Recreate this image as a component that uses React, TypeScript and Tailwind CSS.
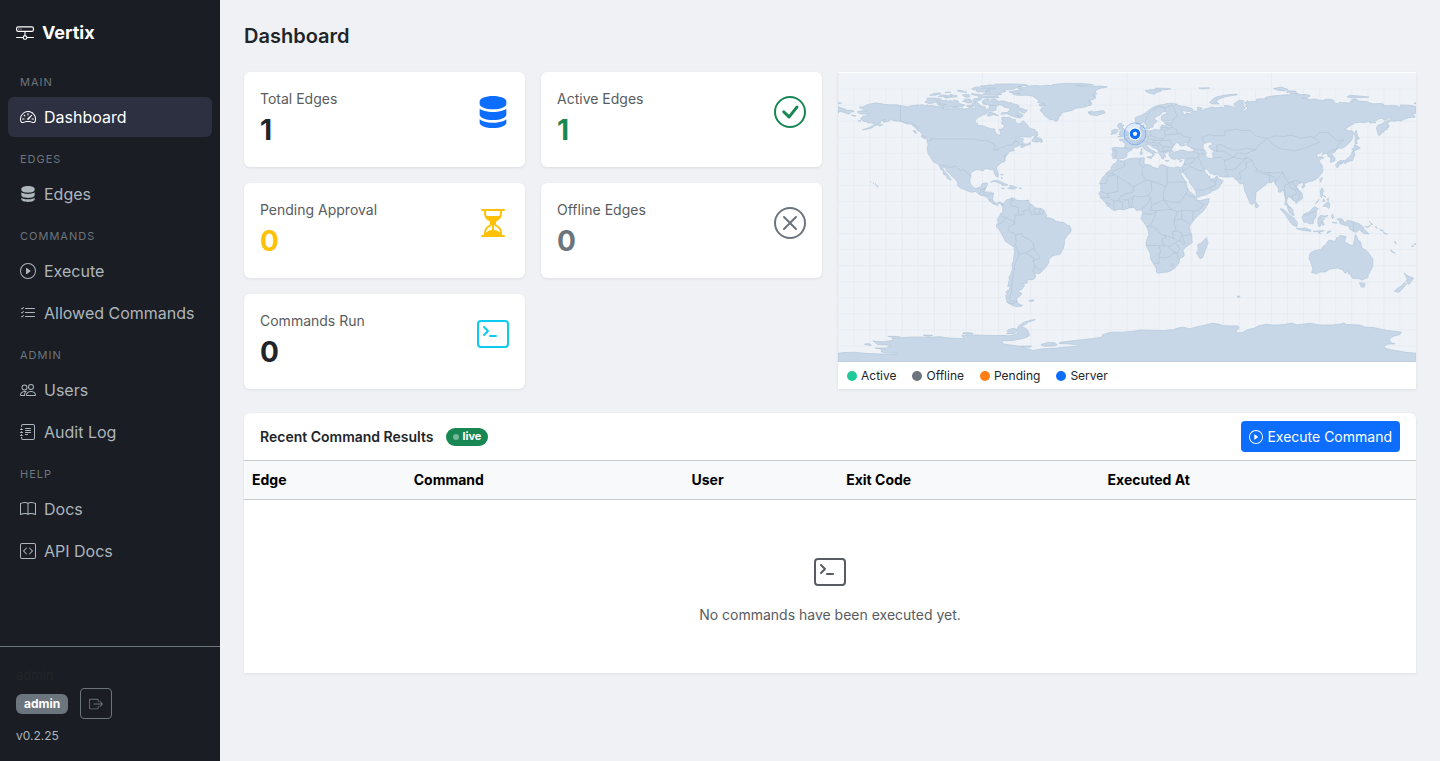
import React from 'react';
import {
  BsHddNetwork,
  BsSpeedometer2,
  BsServer,
  BsPlayCircle,
  BsListCheck,
  BsPeople,
  BsJournalText,
  BsBook,
  BsCodeSquare,
  BsBoxArrowRight,
  BsCheckCircle,
  BsHourglassSplit,
  BsXCircle,
  BsTerminal
} from 'react-icons/bs';

interface NavItem {
  label: string;
  icon: any;
  active?: boolean;
}

interface NavSection {
  title: string;
  items: NavItem[];
}

const navSections: NavSection[] = [
  { title: 'Main', items: [{ label: 'Dashboard', icon: BsSpeedometer2, active: true }] },
  { title: 'Edges', items: [{ label: 'Edges', icon: BsServer }] },
  {
    title: 'Commands',
    items: [
      { label: 'Execute', icon: BsPlayCircle },
      { label: 'Allowed Commands', icon: BsListCheck }
    ]
  },
  {
    title: 'Admin',
    items: [
      { label: 'Users', icon: BsPeople },
      { label: 'Audit Log', icon: BsJournalText }
    ]
  },
  {
    title: 'Help',
    items: [
      { label: 'Docs', icon: BsBook },
      { label: 'API Docs', icon: BsCodeSquare }
    ]
  }
];

const stats = [
  { label: 'Total Edges', value: 1, icon: BsServer, text: 'text-[#212529]', color: 'text-[#0d6efd]' },
  { label: 'Active Edges', value: 1, icon: BsCheckCircle, text: 'text-[#198754]', color: 'text-[#198754]' },
  { label: 'Pending Approval', value: 0, icon: BsHourglassSplit, text: 'text-[#ffc107]', color: 'text-[#ffc107]' },
  { label: 'Offline Edges', value: 0, icon: BsXCircle, text: 'text-[#6c757d]', color: 'text-[#6c757d]' },
  { label: 'Commands Run', value: 0, icon: BsTerminal, text: 'text-[#212529]', color: 'text-[#0dcaf0]' }
];

const legend = [
  { label: 'Active', color: 'bg-[#20c997]' },
  { label: 'Offline', color: 'bg-[#6c757d]' },
  { label: 'Pending', color: 'bg-[#fd7e14]' },
  { label: 'Server', color: 'bg-[#0d6efd]' }
];

const columns = [
  { label: 'Edge', width: 'w-[13.8%]' },
  { label: 'Command', width: 'w-[23.7%]' },
  { label: 'User', width: 'w-[13.2%]' },
  { label: 'Exit Code', width: 'w-[22.3%]' },
  { label: 'Executed At', width: 'w-[27%]' }
];

// Land outlines as "lon,lat" pairs
const land: string[] = [
  // North America
  '-141,69.7 -136.5,68.9 -134.4,69.6 -131.4,69.9 -129.8,70.2 -129.1,69.8 -127.4,70.4 -125.8,69.5 -124.4,70.2 -124.3,69.4 -121.5,69.8 -119.9,69.4 -117.6,69 -115.2,68.9 -113.9,68.4 -115.3,67.9 -113.5,67.7 -110.8,67.8 -109.9,68 -108.9,67.4 -107.8,67.9 -108.8,68.3 -108.2,68.7 -106.2,68.8 -105.3,68.6 -104.3,68 -103.2,68.1 -101.5,67.6 -99.9,67.8 -98.4,67.8 -98.6,68.4 -97.7,68.6 -96.1,68.2 -96.1,67.3 -95.5,68.1 -94.7,68.1 -94.2,69.1 -95.3,69.7 -96.5,70.1 -96.4,71.2 -95.2,71.9 -93.9,71.8 -92.9,71.3 -91.5,70.2 -92.4,69.7 -90.5,69.5 -90.5,68.5 -89.2,69.3 -88,68.6 -88.3,67.9 -87.4,67.2 -86.3,67.9 -85.6,68.8 -85.5,69.9 -84.1,69.8 -82.6,69.7 -81.3,69.2 -81.2,68.7 -82,68.1 -81.3,67.6 -81.4,67.1 -83.3,66.4 -84.7,66.3 -85.8,66.6 -86.1,66.1 -87,65.2 -87.3,64.8 -88.5,64.1 -89.9,64 -90.7,63.6 -90.8,63 -91.9,62.8 -93.2,62 -94.2,60.9 -94.6,60.1 -94.7,58.9 -93.2,58.8 -92.8,57.8 -92.3,57.1 -90.9,57.3 -89,56.9 -88,56.5 -87.3,56 -86.1,55.7 -85,55.3 -83.4,55.2 -82.3,55.1 -82.4,54.3 -82.1,53.3 -81.4,52.2 -79.9,51.2 -79.1,51.5 -78.6,52.6 -79.1,54.1 -79.8,54.7 -78.2,55.1 -77.1,55.8 -76.5,56.5 -76.6,57.2 -77.3,58.1 -78.5,58.8 -77.3,59.9 -77.8,60.8 -78.1,62.3 -77.4,62.6 -75.7,62.3 -73.8,62.4 -72.9,62.1 -71.7,61.5 -71.4,61.1 -69.6,61.1 -69.6,60.2 -69.3,59 -68.4,58.8 -67.6,58.2 -66.2,58.8 -65.2,59.9 -64.6,60.3 -63.8,59.4 -62.5,58.2 -61.4,57 -61.8,56.3 -60.5,55.8 -59.6,55.2 -58,54.9 -57.3,54.6 -56.9,53.8 -55.8,53.3 -55.7,52.1 -57.1,51.4 -58.8,51.1 -60,50.2 -61.7,50.1 -63.9,50.3 -66.4,50.2 -67.2,49.5 -68.5,49.1 -70,47.7 -71.1,46.8 -70.3,47 -68.7,48.3 -66.6,49.1 -65.1,49.2 -64.2,48.7 -65.1,48.1 -64.8,47 -64.5,46.2 -63.2,45.7 -61.5,45.9 -60.5,47 -60.4,46.3 -59.8,45.9 -61,45.3 -63.3,44.7 -65.4,43.5 -66.1,43.6 -66.2,44.5 -64.4,45.3 -66,45.3 -67.1,45.1 -68,44.3 -70.1,43.7 -70.7,43.1 -70.8,42.3 -70,41.8 -71.1,41.5 -72.9,41.2 -74,40.6 -74,39.7 -75.1,39 -75.5,39.5 -75,38.4 -76,37.2 -76.3,39.1 -76.3,38 -76,36.9 -75.7,35.6 -76.4,34.8 -77.4,34.5 -78.6,33.9 -79.2,33.2 -80.3,32.5 -81.3,31.4 -81.3,30 -80.5,28.5 -80.1,26.9 -80.4,25.2 -81.2,25.2 -81.7,25.9 -82.7,27.5 -82.9,29.1 -84.1,30.1 -85.1,29.6 -86.4,30.4 -89.2,30.3 -89.4,29.2 -90.2,29.1 -91.6,29.7 -93.8,29.7 -94.7,29.5 -96.6,28.3 -97.4,27.4 -97.1,25.9 -97.7,24.3 -97.8,22.4 -97.2,20.6 -95.9,18.8 -94.4,18.1 -92.8,18.5 -91.4,18.9 -90.8,19.3 -90.5,20.7 -89.6,21.3 -87.1,21.5 -86.8,20.8 -87.4,19.6 -87.8,18.3 -88.3,17.5 -88.9,15.9 -87.9,15.9 -86,15.9 -84.4,15.8 -83.1,15 -83.4,13.6 -83.6,11.6 -83.8,11.1 -82.5,9.5 -81.4,8.8 -79.6,9.6 -78.1,9.2 -77.4,8.7 -77.9,7.2 -78.4,8.4 -79.6,8.9 -80.4,8.3 -80.9,7.2 -81.7,8.1 -82.9,8.2 -83.7,8.7 -84.7,9.6 -84.9,10 -85.7,10 -85.9,10.9 -87.7,12.9 -89.3,13.5 -91.2,13.9 -92.2,14.5 -93.9,16 -94.7,16.2 -96.6,15.7 -98,16.1 -99.7,16.7 -101.7,17.7 -103.5,18.3 -104.9,19.3 -105.7,20.4 -105.3,21.4 -106,22.8 -108.4,25.2 -109.4,25.8 -109.3,26.4 -110.4,27.2 -112.2,29 -113.1,31.2 -114.8,31.5 -114.7,30.2 -112.8,28 -111.6,26.7 -111,25.7 -109.4,23.4 -110.2,23.3 -112.2,24.7 -112.3,26 -114.5,27.1 -114.2,28.6 -115.5,29.6 -116.7,31.6 -117.3,33 -118.4,33.7 -120.6,34.6 -121.7,36.2 -122.5,37.8 -123.9,39.8 -124.2,42 -124.5,42.8 -123.9,45.5 -124.6,48.2 -123.1,48 -122.6,47.1 -122.8,49 -125,50.4 -127.4,50.8 -128,52.3 -129.3,53.6 -130.5,54.3 -131.1,55.2 -132.3,56.4 -133.5,57.2 -134.1,58.1 -136.6,58.2 -137.8,58.5 -139.9,59.5 -142.6,60.1 -144,60 -146,60.5 -147.1,60.9 -148.2,60.7 -148,60 -149.7,59.7 -151.7,59.2 -151.4,60.7 -150.3,61 -151.9,60.7 -154,59.4 -153.3,58.9 -154.2,58.1 -156.3,57.4 -158.1,56.5 -158.4,56 -161.8,55 -164.8,54.6 -162.9,55.3 -160.6,56 -158.7,57 -157.7,57.6 -157,58.9 -158.2,58.6 -160.4,59.1 -161.4,58.7 -162,59.7 -163.8,59.8 -166.1,61.5 -165.3,62.1 -164.6,63.1 -163.1,63.1 -160.8,63.8 -161.5,64.4 -160.8,64.8 -162.8,64.3 -164.5,64.4 -166.4,64.7 -168.1,65.7 -166.7,66.1 -164.5,66.6 -161.7,66.1 -162.5,66.7 -163.7,67.1 -164.4,67.6 -166.8,68.4 -166.2,68.9 -164.4,68.9 -163.2,69.4 -161.9,70.3 -159,70.9 -156.6,71.4 -155.1,71.1 -152.3,70.8 -150.7,70.4 -147.6,70.2 -143.6,70.2',
  // South America
  '-77.4,8.7 -75.7,9.4 -75.5,10.6 -74.9,11.1 -73.4,11.3 -71.7,12.4 -71.3,12.1 -72,11.4 -71.3,10.9 -71.6,10 -71,10.2 -71.4,11.5 -70.2,12.2 -69.9,11.4 -68.2,10.6 -66.2,10.6 -64.3,10.4 -61.9,10.7 -62.7,10.4 -60.8,9.4 -60.7,8.6 -59.1,8 -57.1,6 -55.9,5.8 -53.6,5.6 -51.8,4.6 -51.3,4.1 -50.5,1.9 -49.9,1 -50.4,-.1 -48.6,-.2 -46.6,-.9 -44.9,-1.6 -44.6,-2.7 -43.4,-2.4 -41.5,-2.9 -39.9,-2.9 -38.5,-3.7 -37.2,-4.8 -35.6,-5.1 -35.2,-6.5 -34.7,-7.3 -35.1,-9 -37,-11 -37.7,-12.2 -39,-13.8 -38.9,-15.7 -39.3,-17.9 -39.8,-19.6 -40.8,-20.9 -41,-22 -42,-23 -44.6,-23.4 -46.5,-24.1 -48.5,-25.9 -48.9,-28.7 -50.7,-31 -52.7,-33.2 -53.8,-34.4 -54.9,-35 -56.2,-34.9 -57.8,-34.5 -58.4,-33.9 -58.5,-34.4 -57.2,-35.3 -57.4,-36 -56.7,-36.4 -57.7,-38.2 -59.2,-38.7 -62.3,-38.8 -62.1,-40.7 -63.8,-41.2 -65.1,-41.1 -65,-42.1 -63.8,-42.1 -65.3,-44.5 -67.3,-45.6 -67.6,-46.3 -65.6,-47.2 -66,-48.1 -67.8,-49.9 -69.1,-50.7 -68.2,-52.3 -69.5,-52.3 -71,-53.8 -72.6,-53.5 -74.7,-52.8 -75.6,-48.7 -74.1,-46.9 -75.6,-46.6 -73.2,-44.5 -72.7,-42.4 -74.3,-43.2 -73.7,-39.9 -73.2,-39.3 -73.6,-37.2 -72.6,-35.5 -71.4,-32.4 -71.5,-28.9 -70.9,-27.6 -70.1,-21.4 -70.4,-18.3 -71.4,-17.8 -73.4,-16.4 -76,-14.6 -76.3,-13.5 -79.8,-7.2 -81.2,-6.1 -81.4,-4.7 -79.8,-2.7 -80.9,-2.2 -80,.4 -78.9,1.4 -78.9,2.3 -77.1,3.8 -77.5,4 -77.3,6.6 -77.9,7.2',
  '-68.6,-52.6 -68.2,-53.1 -66.4,-54.4 -65,-54.7 -65.5,-55.2 -69.2,-55.5 -71,-55 -74.7,-52.8 -72.4,-53.7 -70.6,-53.6',
  // Europe and Asia
  '-5.4,36 -5.9,36 -6.5,36.9 -7.9,36.8 -8.9,36.9 -8.7,38.2 -9.5,38.7 -9,39.8 -8.8,41.2 -9.4,43 -8,43.7 -6.8,43.6 -4.3,43.4 -1.9,43.4 -1.4,44 -1.2,46 -2.2,47 -3,47.6 -4.5,48 -4.6,48.7 -3.3,48.9 -1.6,48.6 -1.9,49.8 -1,49.3 1.3,50.1 1.6,50.9 3.3,51.3 3.8,51.6 4.7,53.1 6.1,53.5 7.9,53.7 8.8,54 8.5,55 8.1,55.5 8.1,56.5 8.5,57.1 9.4,57.2 10.6,57.7 10.3,56.9 10.9,56.5 9.6,55.5 9.9,54.6 11,54 12.5,54.5 14.1,53.8 16.4,54.5 17.6,54.9 18.6,54.7 19.7,54.4 21.3,55.2 21.1,56.8 21.6,57.4 22.5,57.8 23.3,57.2 24.1,57 24.4,58.4 23.4,58.6 23.3,59.2 24.6,59.5 28,59.5 29.1,60 28.1,60.5 26.3,60.4 22.9,59.8 21.3,60.7 21.5,61.7 21.1,62.6 22.4,63.8 25.4,65.1 25.3,65.5 23.9,66 22.2,65.7 21.2,65 21.4,64.4 19.8,63.6 17.8,62.7 17.1,61.3 18.8,60.1 17.9,59 16.8,58.7 16.4,57 15.9,56.1 14.7,56.2 14.1,55.4 12.9,55.4 12.6,56.3 11,58.9 10.4,59.5 8.4,58.3 7,58.1 5.7,58.6 5.3,59.7 5,62 5.9,62.6 8.6,63.5 10.5,64.5 12.4,65.9 14.8,67.8 16.4,68.6 19.2,69.8 21.4,70.3 23,70.2 24.5,71 28.2,71.2 31.3,70.5 30,70.2 32.1,69.9 33.8,69.3 36.5,69.1 40.3,67.9 41.1,67.5 41.1,66.8 40,66.3 38.4,66 33.9,66.8 33.2,66.6 34.8,65.9 34.9,64.4 37,63.8 37.1,64.3 36.5,64.8 37.2,65.1 39.6,64.5 40.4,64.8 39.8,65.5 42.1,66.5 43.9,66.1 44.5,66.8 43.7,67.4 44.2,68 43.5,68.6 46.3,68.3 46.8,67.7 45.6,67.6 45.6,67 47.9,66.9 48.1,67.5 50.2,68 53.7,68.9 53.5,68.2 57.3,68.5 58.8,68.9 59.9,68.3 61.1,68.9 60.6,69.8 63.5,69.5 64.9,69.2 68.5,68.1 69.2,68.6 66.9,69.5 66.7,71 68.5,71.9 69.2,72.8 69.9,73 72.6,72.8 72.8,72.2 71.8,71.4 72.8,70.4 72.6,69 73.7,68.4 73.2,67.7 71.3,66.3 72.4,66.2 73.9,66.8 75.1,67.8 74.9,69 73.8,69.1 74.4,70.6 73.1,71.4 74.9,72.1 74.7,72.8 75.7,72.3 75.3,71.3 76.4,71.2 75.9,71.9 77.6,72.3 79.7,72.3 81.5,71.8 80.6,72.6 80.5,73.6 82.3,73.9 86.8,73.9 86,74.5 87.2,75.1 90.3,75.6 93.2,76 95.9,76.1 98.9,76.4 100.8,76.4 102,77.3 104.4,77.7 106.1,77.4 104.7,77.1 107,77 107.2,76.5 111.1,76.7 113.3,76.2 114.1,75.8 113.9,75.3 109.4,74.2 113,74 113.5,73.3 115.6,73.8 118.8,73.6 119,73.1 123.2,73 123.3,73.7 127,73.6 128.6,73 129.1,72.4 128.5,72 129.7,71.2 131.3,70.8 132.3,71.8 133.9,71.4 135.6,71.7 137.5,71.3 139.9,71.5 139.1,72.4 140.5,72.8 149.5,72.2 150.4,71.6 153,70.8 157,71 159,70.9 159.8,70.5 159.7,69.7 162.3,69.6 167.8,69.6 169.6,68.7 170.8,69 170,69.7 170.5,70.1 175.7,69.9 178.6,69.4 180,69 180,65 178.7,64.5 177.4,64.6 178.9,63.3 179.4,63 179.2,62.3 177.4,62.5 173.7,61.7 170.3,59.9 168.9,60.6 166.3,59.8 165.8,60.2 163.5,59.9 163.2,59.2 162,58.2 163.2,57.6 163.1,56.2 162.1,56.1 162.1,54.9 160.4,54.3 160,53.2 158.5,53 158.2,51.9 156.8,51 156,53.2 155.4,55.4 155.9,56.8 156.8,57.8 158.4,58.1 160.2,59.3 161.9,60.3 163.7,61.1 164.5,62.6 163.3,62.5 162.7,61.6 160.1,60.5 159.3,61.8 156.7,61.4 154.2,59.8 155,59.1 151.3,58.8 151.3,59.5 149.8,59.7 148.5,59.2 145.5,59.3 142.2,59 139,57.1 135.1,54.7 136.7,54.6 138.2,53.8 139.9,54.2 141.3,53.1 141.4,52.2 140.6,51.2 140.5,50 140.1,48.4 138.2,46.3 136.9,45.1 135.5,44 133.5,42.8 132.3,43.3 130.9,42.6 129.7,41.6 129.7,40.9 127.5,39.8 127.4,39.2 128.3,38.6 129.5,36.8 129.5,35.6 129.1,35.1 127.4,34.5 126.5,34.4 126.9,36.9 126.2,37.7 125.3,37.7 125,38.5 125.1,39.6 124.3,39.9 122.9,39.6 121.1,38.9 121.6,39.4 122.2,40.4 121.6,40.9 118,39.2 118.9,37.4 120.8,37.9 122.4,37.5 122.5,36.9 121.1,36.7 119.2,34.9 120.2,34.4 121.9,31.7 121.5,30.1 122.1,29.8 121.7,28.2 118.7,24.5 115.9,22.8 113.8,22.5 110.8,21.4 110.4,20.3 109.9,20.3 109.9,21.4 108.5,21.7 106.7,20.7 105.9,19.8 105.7,19 107.4,16.7 108.9,15.3 109.3,13.4 109.2,11.7 107.2,10.4 105.2,8.6 105.1,9.9 103.5,10.6 102.6,12.2 100.8,12.6 101,13.4 100.1,13.4 100,12.3 99.2,9.9 100.5,7.4 102.1,6.2 103.4,4.9 103.4,3.4 104.2,1.3 103.5,1.2 101.4,2.8 100.3,5 100.1,6.5 98.5,8.4 98.3,7.8 98.8,11.4 97.6,16.1 97.2,16.9 95.4,15.7 94.2,16 94.3,18.2 93.5,19.4 92.4,20.7 91.8,22.2 90.5,22.8 90.3,21.8 87,21.5 86.5,20.2 85.1,19.5 82.2,17 80.3,15.9 80.2,13.8 79.9,10.4 79.2,9.2 77.5,8 76.6,8.9 75.4,11.8 74.6,14 73.5,16 72.8,19.2 72.6,21.4 70.5,20.9 69.2,22.1 69.3,22.8 67.4,23.9 66.4,25.4 61.5,25.1 57.4,25.7 56.5,27.1 54.7,26.5 51.5,27.9 50.1,30.1 48.9,30.3 48,30 48.8,27.7 50.2,26.7 50.8,24.8 51.3,26.1 51.8,24 54,24.1 56.1,26.1 56.8,24.2 58.7,23.6 59.8,22.5 58.9,21.1 57.8,20.2 57.7,19 55.3,17.2 52.4,16.4 52.2,15.6 48.7,14 45.6,13.3 45,12.7 43.5,12.6 42.9,14.8 42.8,16.3 40.9,19.5 39.1,21.3 38.5,23.7 37.2,24.9 35.1,28.1 34.6,28.1 34.9,29.5 34.3,31.2 35,32.8 36,34.6 36.2,36.6 34.7,36.8 32.5,36.1 30.6,36.7 29.7,36.1 27.6,36.7 26.3,38.2 26.2,39.5 29,40.5 31.1,41.1 33.5,42 35.2,42 36.9,41.3 38.3,40.9 40.4,41 41.6,41.5 41.5,42.6 36.7,45.2 37.7,46.6 39.1,47.3 35.8,46.3 35,45.7 36.3,45.1 33.9,44.4 32.5,45.3 33.6,45.9 30.7,46.6 29.6,45.3 28.8,44.9 28.6,43.7 27.7,42.6 28.1,41.6 29,41.3 27.6,41 26.4,40.2 26.1,40.8 23.7,40.7 24.4,40.1 22.6,40.3 24,38.2 24,37.7 23.1,37.9 22.8,36.4 21.7,36.8 21.1,38.3 19.4,40.3 19.6,41.7 18.5,42.5 15.2,44.2 14.3,45.2 13.1,45.7 12.3,45.4 12.6,44.1 13.5,43.6 14,42.8 15.1,42 16.2,41.7 18.5,40.2 16.9,40.4 16.4,39.8 17.2,39.4 16.1,38 15.7,37.9 16.1,39 15.4,40 14.1,40.8 12.1,41.7 10.5,42.9 10.2,43.9 8.9,44.4 7.4,43.7 6.5,43.1 4.6,43.4 3.1,43.1 3,41.9 .8,41 -.3,39.3 .1,38.7 -.7,37.6 -2.1,36.7 -4.4,36.7',
  // Africa
  '34.3,31.2 32.3,31.3 31,31.6 29,30.9 27,31.2 25,31.6 23,32.7 21.5,32.9 20.1,32.2 20,30.9 19,30.3 18,30.8 15.7,31.4 15.2,32.3 13.1,32.9 11.5,33.1 10.3,33.8 10.8,34.8 10.6,35.9 11.1,36.9 9.5,37.3 8.4,36.9 6.3,37.1 3.2,36.8 1.5,36.6 -1.2,35.7 -2.2,35.2 -4.6,35.3 -5.9,35.8 -6.9,34.1 -8.7,33.2 -9.8,31.2 -9.6,29.9 -11.4,28.8 -12.6,28 -14,26.1 -14.8,25.6 -16,23.7 -17,21.4 -16.3,20.1 -16.3,16.7 -17.6,14.7 -16.7,13.6 -16.7,12.4 -15,11 -13.2,8.9 -12.4,7.3 -11.4,6.8 -9,4.8 -7.5,4.3 -5.8,5 -2.9,5 -2,4.7 1.1,5.9 4.3,6.3 5.9,4.3 8.5,4.8 9.4,3.7 9.8,3.1 9.3,1.2 8.8,-.8 11.1,-4 12.3,-6 13.1,-7.8 13.7,-10.7 12.5,-13.5 11.8,-15.8 12.2,-18.1 14.3,-22.1 14.9,-26.1 17.1,-29.9 18.2,-31.7 18.4,-34.1 20,-34.8 21.5,-34.3 25.2,-34 27.5,-33.2 30,-31.3 31.3,-29.4 32.2,-28.8 32.6,-27.5 32.7,-25.7 35.6,-24.1 35.5,-22.1 34.7,-20.5 36.3,-18.7 38.5,-17.1 40.6,-15.7 40.4,-10.8 39.4,-8.9 39.2,-6.8 38.8,-5.9 39.6,-4.4 41.6,-1.7 44.1,1.1 47.7,4.2 49.5,6.8 50.7,9.2 51.2,11.8 47.9,11.1 46.6,10.8 44.6,10.4 43.1,11.5 43.3,12.4 41.2,14.5 39.2,15.9 37.9,17.4 37.2,19.6 36.9,22 35.5,23.9 34.1,26.1 32.4,29.9 34.2,27.8 34.9,29.5',
  // Antarctica
  '-180,-84.5 -176,-84.1 -169.9,-83.9 -163,-84.6 -153,-85 -143,-85 -143,-84.6 -150,-84.3 -153,-83.7 -152.9,-82.1 -156.8,-81.3 -150.6,-81.3 -146.8,-79.9 -149.5,-79.4 -155.3,-79.1 -158.4,-76.9 -151.3,-77.4 -146.1,-76.5 -146.2,-75.4 -141.6,-75.1 -136,-74.5 -129,-74.4 -121,-74.5 -116,-74.2 -113,-74.8 -107.6,-75.2 -101,-75.3 -103,-73.6 -99,-73.1 -90,-73.3 -83.9,-73.5 -78,-73.4 -74,-73.7 -69,-72.8 -67.6,-71.2 -68.5,-69.7 -67.6,-67.7 -65.7,-66.2 -64,-65.2 -60,-64 -57.2,-63.5 -57.6,-64 -62,-65.2 -62.5,-66.2 -65.3,-67.6 -65.5,-68.2 -63,-69 -61.8,-70.5 -61,-72.4 -60.8,-73.7 -63.3,-74.9 -67,-75.8 -72,-76.7 -77.2,-76.7 -77.9,-78.4 -74,-79.2 -66,-80.3 -58.5,-82.8 -53,-81.8 -45,-81.5 -41,-80.9 -37,-80.6 -29,-79.9 -29.7,-79.3 -36,-78.8 -42.5,-78.4 -41,-77.6 -35,-76.9 -28,-76.1 -20.5,-75.3 -15.7,-74.5 -15.4,-73.1 -11,-71.7 -8,-71.4 -2,-71.4 4,-70.8 8,-70 15,-70.2 22.6,-70.4 29,-69.8 33,-68.5 35,-68.3 39,-69.3 44,-68 49.6,-66.8 53,-65.9 57,-66.4 60,-67.4 64,-67.5 69.3,-67.5 69.8,-69 67.8,-70.5 68.3,-71.9 72,-71.6 75,-69.9 79,-69 82,-67.4 87,-66.5 91,-67 97,-66.8 102.5,-65.7 106,-66.9 114,-65.8 120,-66.9 128,-66.9 134,-66.1 134.7,-65.6 136.8,-66.7 145,-66.9 148,-68.2 153.4,-68.5 161.7,-70.3 166,-70.8 171,-71.4 170,-72.9 166,-74 163.8,-75.2 163.6,-76.5 164.5,-78 167,-78.7 162,-78.9 160,-80.3 160.7,-81.3 164,-82.3 170,-83.2 174,-84 180,-84.5 180,-90 -180,-90',
  '-68.4,-70.9 -69,-69.5 -71,-69 -74,-70 -74.8,-71 -73.8,-71.8 -75,-72.4 -70,-72.3',
  '-45,-78 -49,-77.8 -53.7,-79.1 -52,-80.2 -45,-80 -43.5,-79.2',
  '-59.5,-80 -60,-80.8 -65,-80.6 -66.3,-80.2',
  '-98,-71.8 -102,-71.8 -102.3,-72.4 -99,-72.5 -96,-72.4 -96.2,-72',
  '-121,-73.5 -124,-73.9 -127,-73.3 -124,-73.2',
  '-141,-74.5 -146,-74.7 -149,-74 -145,-74',
  '-159.2,-79.5 -161.2,-79.6 -163.5,-78.9 -161.2,-78.4',
  // Arctic Canada
  '-114.7,72.7 -112.4,73 -111.1,72.5 -109.9,73 -108.2,71.7 -107.7,72.1 -108.4,73.1 -106.5,73.1 -105.4,72.7 -104.5,71 -101,70 -102.7,69.5 -102.4,68.8 -106,69.2 -109,68.8 -113.3,68.5 -115.2,69.3 -117.3,70 -112.4,70.4 -114.4,70.6 -117.9,70.5 -118.4,70.9 -116.1,71.3 -119.4,71.6 -118.6,72.3 -115.2,73.3',
  '-120.5,71.4 -123.1,70.9 -125.9,71.9 -123.9,73.7 -124.9,74.3 -121.5,74.4 -117.6,74.2 -115.5,73.5 -119.2,72.5',
  '-61.9,66.9 -63.9,65 -65.1,65.4 -66.7,66.4 -68,66.3 -68.1,65.7 -65.3,64.4 -64.7,63.4 -65,62.7 -66.3,62.9 -68.8,63.7 -66.3,62.3 -66.2,61.9 -68.9,62.3 -71,62.9 -72.2,63.4 -74.8,64.7 -77.7,64.2 -78.6,64.6 -77.9,65.3 -74,65.5 -73.9,66.3 -72.7,67.3 -73.3,68.1 -76.9,68.9 -77.3,69.8 -79,70.2 -81.3,69.7 -84.9,70 -88.7,70.4 -89.5,70.8 -88.5,71.2 -89.9,71.2 -90.2,72.2 -89.4,73.1 -88.4,73.5 -85.8,73.8 -86.6,73.2 -85.8,72.5 -84.9,73.3 -82.3,73.8 -80.6,72.7 -80.7,72.1 -77.8,72.7 -74.2,71.8 -74.1,71.3 -72.2,71.6 -71.2,70.9 -67.9,70.1 -67,69.2 -68.8,68.7 -64.9,67.8 -63.4,66.9',
  '-85.2,65.7 -84.5,65.4 -81.6,64.5 -81.6,64 -80.1,63.7 -81,63.4 -83.1,64.1 -85.5,63.1 -87.2,63.5 -86.2,64.8 -85.9,65.7',
  '-68.5,83.1 -63.7,82.9 -61.9,82.4 -67.7,81.5 -65.5,81.5 -69.5,80.6 -71.2,79.8 -76.9,79.3 -75.4,78.5 -77.9,77.9 -79.8,77.2 -77.9,76.8 -80.6,76.2 -83.2,76.5 -86.1,76.3 -89.5,76.5 -89.6,77 -87.8,77.2 -88.3,77.9 -85,77.5 -86.3,78.2 -88,78.4 -85.1,79.3 -86.9,80.3 -83.4,80.1 -81.8,80.5 -87.6,80.5 -91.4,81.6 -91.6,81.9 -87,82.3 -85.5,82.7 -83.2,82.3 -82.4,82.9 -79.3,83.1 -72.8,83.2',
  '-87,79.7 -85.8,79.3 -89,78.3 -92.9,78.3 -94,78.8 -93.1,79.4 -96.1,79.7 -96.7,80.2 -94.7,81.2 -92.4,81.3 -91.1,80.7 -87.8,80.3',
  '-79.8,74.9 -81.9,74.4 -88.2,74.4 -92.4,74.8 -92.9,75.9 -96,76.4 -97.1,76.8 -96.7,77.2 -93.6,76.8 -91.6,76.8 -90.7,76.4 -89.2,75.6 -84.8,75.7 -81.1,75.7',
  '-108.2,76.2 -105.9,76 -105.7,75.5 -106.3,75 -109.7,74.9 -112.2,74.4 -113.9,74.7 -111.8,75.2 -117.7,75.2 -115.4,76.5 -112.6,76.1 -109.1,75.5 -110.5,76.4 -109.6,76.8',
  '-100.4,73.8 -97.4,73.8 -98.1,73 -96.5,72.6 -96.7,71.7 -98.4,71.3 -102.5,72.5 -100.4,72.7 -101.5,73.4',
  '-92.4,74.1 -90.5,73.9 -92,73 -94.3,72 -95.4,72.1 -96,73.4 -94.5,74.1',
  '-98.5,76.7 -97.7,75.7 -98.2,75 -100.9,75.1 -102.6,76.3 -100,76.6',
  '-122.9,76.1 -121.2,76.9 -119.1,77.5 -116.2,77.6 -116.3,76.9 -119.9,76.1',
  '-111.3,78.2 -109.9,78 -113.5,77.7 -112.7,78.1',
  '-105.5,79.3 -103.5,79.2 -99.7,77.9 -105.2,78.4',
  '-95.6,69.1 -98.4,69 -99.8,69.4 -98.2,70.1 -96.6,69.7',
  '-56.1,50.7 -56.8,49.8 -54.5,49.5 -53,48.7 -52.6,47.5 -53.5,46.6 -54,47.6 -56,46.9 -59.3,47.6 -58.4,49.1 -57.4,50.7 -55.4,51.6',
  '-123.5,48.5 -126.9,49.5 -128.4,50.8 -125.8,50.3',
  '-133.2,54.2 -131.7,54.1 -131.2,52.2 -132.5,53.1',
  '-152.6,57.9 -154.7,57.5 -154.5,57 -152.1,57.6',
  '-171.7,63.8 -169.5,63 -168.7,63.3 -170.5,63.7',
  '-165.6,59.9 -167.5,60.2 -166.5,60.4',
  '-180,69 -177.6,68.2 -174.9,67.2 -175,66.6 -171.9,66.9 -169.9,66 -172.5,65.4 -173,64.3 -176.2,65.4 -178.7,66.1 -179.9,65.9 -179.4,65.4 -180,65',
  '-180,71.5 -177.6,71.3 -180,70.8',
  '178.7,71.1 180,71.5 180,70.8',
  // Greenland
  '-46.8,82.6 -43.4,83.2 -38.6,83.5 -27.1,83.5 -20.8,82.7 -22.7,82.3 -31.9,82.2 -24.8,81.8 -22.1,81.7 -15.8,81.9 -12.2,81.3 -16.8,80.4 -17.7,80.1 -19.7,78.8 -19.7,77.6 -18.5,77 -21.7,76.6 -19.8,76.1 -19.6,75.2 -20.7,75.2 -19.4,74.3 -21.6,74.2 -20.8,73.5 -23.6,73.3 -22.3,72.2 -24.3,72.6 -22.1,71.5 -21.8,70.7 -23.5,70.5 -25.5,71.4 -26.4,70.2 -22.3,70.1 -27.7,68.5 -31.8,68.1 -34.2,66.7 -39.8,65.5 -40.7,64.8 -41.2,63.5 -42.8,62.7 -42.4,61.9 -43.4,60.1 -44.8,60 -46.3,60.9 -48.3,60.9 -49.9,62.4 -51.6,63.6 -52.3,65.2 -53.7,66.1 -54,67.2 -53,68.4 -51.5,68.7 -50.9,69.9 -53.5,69.3 -54.7,69.6 -54.4,70.8 -51.4,70.6 -54,71.5 -55.8,71.7 -54.7,72.6 -57.3,74.7 -58.6,75.5 -61.3,76.1 -68.5,76.1 -71.4,77 -66.8,77.4 -73.3,78 -73.2,78.4 -65.7,79.4 -65.3,79.8 -68,80.1 -67.2,80.5 -62.2,81.3 -62.7,81.8 -57.2,82.2 -53,81.9 -50.4,82.4 -46.6,82',
  // Caribbean
  '-84.9,21.9 -83,23.1 -80.6,23.1 -77.2,21.7 -74.2,20.2 -77.7,19.9 -78.5,21 -82.2,22.5',
  '-73.2,19.9 -71.7,19.8 -68.5,18.6 -71,17.6 -74.4,18.3 -72.5,18.7',
  '-78.2,18.4 -76.3,18.1 -77.8,17.8',
  '-67.2,18.4 -65.7,18.3 -66.5,17.9',
  '-78.2,25.1 -77.7,24 -77.9,24.9',
  '-78.8,26.7 -77,26.5 -77.5,26.9',
  '-61.8,10.8 -61,10.7 -61.2,10.1',
  // Pacific, South Atlantic
  '-155.9,20.2 -154.9,19.5 -155.8,19',
  '-156.6,21 -157,20.7 -156.2,20.7',
  '-158.2,21.6 -157.7,21.3 -158,21.3',
  '-159.7,22.2 -159.4,22 -159.7,22',
  '-61.2,-51.8 -59.2,-51.3 -57.8,-51.6 -59,-52.2 -60.8,-52.2',
  '68.9,-48.8 70.5,-49.2 69.6,-49.8 68.8,-49.6',
  // European islands
  '-14.5,66.5 -13.6,65.1 -18.7,63.5 -22.8,64 -24,64.9 -22.1,65.1 -24.3,65.6 -22.2,66.4 -20.6,65.7 -16.2,66.5',
  '-3,58.6 -4.1,57.6 -2,57.6 -3.1,56 -1.1,54.6 .2,53.3 1.7,52.7 .6,51.5 1.4,51.2 .5,50.8 -2.5,50.5 -5.8,50.2 -3.4,51.4 -5.3,51.9 -4.2,52.3 -4.6,53.5 -3,54 -3.6,54.6 -5.1,54.9 -4.7,55.5 -5.6,56.3 -6.1,57 -5,58.6',
  '-6.8,52.3 -9.9,51.8 -9.2,52.9 -9.7,53.9 -7.6,55.1 -5.7,54.6 -6,53.2',
  '9.2,41.2 9.7,40.5 9.2,39.2 8.4,39.2 8.2,40.9',
  '9.4,43 9.2,41.4 8.6,42.3',
  '12.4,37.6 15.5,38.2 15.1,36.6',
  '23.7,35.6 26.3,35.3 24.7,35',
  '32.7,35.1 34.6,35.7 33,34.6',
  '12.4,56.1 12.7,55.6 11.1,55.2 10.9,55.8',
  '15.1,79.7 18.3,79.7 21.5,78.9 18.5,77.8 17.1,76.8 13.8,77.4 11.2,78.9',
  '18,80.6 25.4,80.4 27.4,80.1 22.9,79.4 17.4,80.3',
  '44.8,80.6 48.3,80.8 51.5,80.7 49.8,80.4 47.6,80',
  '51.5,71.5 53.4,73.7 55.6,75.1 61.2,76.3 68.2,76.9 68.9,76.5 61.6,75.3 58.5,74.3 55.4,72.4 57.5,70.7 53.7,70.8',
  // Siberia and East Asia
  '91.2,80.3 95.9,81.3 100.2,79.8 97.8,78.8 93.3,79.4',
  '99.9,78.9 105.1,78.7 105.4,78.3 99.4,77.9',
  '137,75.3 139,76.1 145.1,75.6 150.7,75.1 149.6,74.7 139,74.6',
  '139.9,73.4 143.6,73.2 142,73.9',
  '143.6,50.7 144.7,49 142.6,47.9 143.5,46.1 142,46 142.2,49.6 141.7,52 142.7,54.3 143.2,52.5',
  '143.9,44.2 145.3,43.3 143.2,42 141,41.6 140,42.6 141.4,43.4 141.9,45.5',
  '141.9,39.2 141,37 140.6,35.6 137.2,34.6 135.8,33.5 135.1,34.6 132,33.8 130.9,34.2 132.6,35.4 135.7,35.5 138.2,37.4 139.9,39.4 140.3,41.2 141.4,41.4',
  '132,33.2 131.7,31.5 130.7,31.1 129.8,32.6 131,34',
  '134.6,34.2 133.5,33.3 132.4,33.1 133,34.1',
  '121.8,25 120.7,22 120.1,23.6',
  '110.3,20 111,19.7 109.5,18.2 108.7,19.4',
  '121.3,18.5 122.5,17.1 121.7,14.3 124,12.6 120.6,14.2 120.3,16.1',
  '126.4,8.4 126.2,6.3 125.4,5.6 124,7 122,7 123.5,8.6 125.4,9.8',
  '125.5,12.2 125.3,10.4 124.5,11.3',
  '122.5,11.6 123.3,10 122.4,9.7 121.9,11',
  '119.5,11.4 117.2,8.4 118.5,9.3',
  '121.2,13.5 121.3,12.2 120.4,13.5',
  // Indonesia and Oceania
  '117.9,4.1 117.9,1 116.2,-1.8 116,-3.7 114.5,-4 111.7,-3 110.2,-2.9 109,.4 110,1.6 111.2,2.7 113,3.1 115.4,5.4 116.7,6.9 119.2,5.4',
  '95.3,5.5 97.5,5.2 100.6,2.1 103.8,-.1 106.1,-3.1 105.8,-5.9 102.6,-4.2 100.1,-.7 98.6,1.8',
  '105.4,-6.8 108.6,-6.8 110.8,-6.5 114.5,-7.8 114.4,-8.7 108.3,-7.8',
  '119,-.5 120.4,1.3 123.3,.9 125.2,1.4 124.4,.4 120.2,.2 121.5,-.9 123.3,-.7 121.7,-1.9 122.8,-4.5 121.6,-4.8 121,-2.7 120.4,-5.5 119.4,-5.4 118.8,-2.8',
  '124.4,-10.1 127.3,-8.4 125.1,-8.7',
  '119,-8.4 122.9,-8.2 120,-9',
  '116,-8.5 119,-8.5 117,-9',
  '119,-9.4 120.8,-10.2 120,-9.4',
  '127.9,2.2 128.7,1 128,-.9 127.4,1',
  '128,-2.9 130.8,-3.4 128.2,-3.4',
  '131,-.8 134,-.8 135.5,-3.4 137.4,-1.7 141,-2.6 144.6,-3.9 147.6,-6.1 147,-6.7 150.8,-10.3 147.9,-10.1 144.7,-7.6 142.6,-9.3 138.7,-7.3 138,-5.4 133,-4.1 132,-2.8 133.7,-2.2 130.9,-1.4',
  '148.3,-5.6 150,-5.9 152.3,-4.3 150,-6.3',
  '150.9,-2.5 153.1,-4.5 151,-2.7',
  '154.7,-5.3 156,-6.8 155,-6.2',
  '157.5,-7.3 159.8,-8.5 158,-8.2',
  '159.7,-9.2 162.3,-10.5 160,-9.8',
  '166.7,-14.7 167.8,-16.5 167,-16',
  '164.1,-20.2 167.1,-22.3 165,-21.5',
  '177.3,-17.4 178.6,-18 177.5,-18.2',
  '178.7,-16.8 180,-16.2 180,-16.6',
  '143.6,-13.8 145.3,-15 146.4,-19 148.8,-20.4 150.7,-22.4 153.1,-25.9 153.1,-30.4 150.3,-35.7 150,-37.4 146.3,-39 144.5,-38.1 140.6,-38 138.2,-34.4 137.8,-35.3 137.8,-32.9 136,-34.9 134.3,-32.6 131.3,-31.5 126.1,-32.2 123.7,-33.9 119.9,-34 118,-35.1 115,-34.3 115.8,-32 114.2,-27 113.4,-26.1 113.7,-23 114.6,-21.8 116.7,-20.7 120.9,-19.7 122.3,-17.8 123.4,-17.3 125.7,-14.2 127.8,-14.3 129.6,-15 130.6,-12.5 132.6,-12.1 132.4,-11.1 136.5,-11.9 135.5,-15 139.3,-17.4 140.9,-17.4 142.1,-11.3 142.5,-10.7 143.5,-12.8',
  '144.7,-40.7 148.3,-40.9 147.9,-43.2 146,-43.5',
  '172.8,-40.5 174.2,-41.3 171.2,-44.9 169.3,-46.6 166.5,-46 168.4,-44.1 171.1,-42.5',
  '172.6,-34.5 174.6,-36.2 175.8,-36.8 178.5,-37.7 176,-41.3 175.2,-41.6 173.8,-39.3 174.6,-38.8',
  '49.5,-12.5 50.5,-15.7 47.1,-24.9 45.4,-25.6 43.3,-22.1 44.4,-20.1 44,-16.9 46.3,-15.8',
  '81.8,7.5 81.6,6.5 80.3,6 79.7,8.2 80.1,9.8'
];

// Country borders
const borders: string[] = [
  '-141,69.7 -141,60.3 -137.5,58.9 -135.5,59.8 -133.4,58.4 -130,56 -130.5,54.8',
  '-122.8,49 -95.2,49 -94.6,48.7 -91.6,48 -89.6,48 -88.4,48.3 -84.9,46.9 -83.6,46.1 -82.4,45.3 -82.1,43.6 -83.1,42 -80.2,42.4 -78.9,43.6 -76.5,44 -75,45 -71.5,45 -70,46.7 -69.2,47.4 -67.8,47.1 -67.1,45.1',
  '-117.1,32.5 -114.7,32.7 -111,31.3 -108.2,31.3 -108.2,31.8 -106.5,31.8 -104.5,29.6 -103.1,29 -102.4,29.8 -101.4,29.8 -99.5,27.5 -97.1,25.9',
  '-92.2,14.5 -91,16.1 -91.4,17.3 -89.1,17.8 -88.3,18.5',
  '-89.1,17.8 -89.2,15.9 -88.3,15.7',
  '-90.1,13.7 -89.2,14.5 -87.5,13.3',
  '-87.3,13 -85,14.6 -83.1,15',
  '-85.7,11.1 -83.7,10.9',
  '-82.9,8.1 -82.5,9.6',
  '-77.2,8.7 -77.9,7.2',
  '-71.3,12.1 -73,9.7 -72.2,7.3 -70,7 -67.4,6.1 -67.8,2.8 -66.9,1.3 -69.8,1.7 -69.9,-4.3',
  '-78.9,1.4 -75.4,-.1 -70.8,-2.3 -69.9,-4.3 -72.9,-5.3 -74,-7.5 -72.6,-9.5 -70.5,-9.5 -69.6,-11 -65.4,-9.8 -65.3,-11.5 -60.5,-13.8 -58.2,-16.3 -57.9,-20 -55.9,-22.3 -54.3,-24.1 -54.6,-25.6 -58.6,-27.1 -57.6,-30.2 -55.9,-30.9 -53.4,-33.7',
  '-75.4,-.1 -78.5,-3.5 -80.4,-4.4',
  '-69.6,-11 -69,-15 -69.6,-17.5 -67.1,-22.7 -62.8,-22 -59,-19.4 -57.9,-20',
  '-62.8,-22 -57.7,-25.3 -58.6,-27.1',
  '-58.4,-33.9 -57.6,-30.2',
  '-67.1,-22.7 -68.4,-26 -70,-29.5 -70.3,-33.5 -71.4,-38.9 -71.7,-44 -72.3,-48 -73.3,-50.4 -71.9,-52 -68.6,-52.3',
  '-66.9,1.3 -64,2 -64.8,4.1 -60.7,5 -61.4,5.9 -59.8,8.3',
  '-60.7,5 -59.5,2 -56.5,1.9 -52.6,2.3 -51.7,4.2',
  '-57.1,5.9 -58,4.1 -56.5,1.9',
  '-54,5.7 -54.5,2.4',
  '-8.7,27.4 -8.7,28.8 -3.7,30.9 -1.3,32.2 -1.8,34.8',
  '-8.7,27.4 -13,27.7',
  '-17,21 -13,21.3 -12,26 -8.7,26 -8.7,27.4 -5,25 1.8,20.6 4.2,19.2 12,23.5 15,22.9 24,19.5 25,20 25,31.5',
  '-6,25.5 -5.5,16.3 -12.2,14.8 -16.4,16.2',
  '-12.2,14.8 -11.4,12.4 -16.7,12.4',
  '-11.4,12.4 -8,10.2 -8.3,7.6 -7.6,4.4',
  '-13.2,9 -10.5,8.6 -11.4,6.9',
  '-8,10.2 -5.4,10.4 -2.8,9.7 -3,5.1',
  '-5.4,10.4 -4,13.3 0,15 3.6,15.5 4.2,19.2',
  '-2.8,11 .9,11 2.4,12.2 3.6,11.7 2.7,6.4',
  '.9,11 1.2,6.1',
  '3.6,11.7 4.1,13.5 9,12.8 13.5,13.7 15.5,17 15,22.9',
  '13.5,13.7 14.6,12 12,7.4 8.5,4.8',
  '9.3,30.2 9.5,26.4 12,23.5',
  '8.4,36.9 7.6,33.4 10.1,31 11.5,33.1',
  '25,22 36.9,22',
  '24,19.5 22.5,14 22.9,11 27,9.6 33,9.5 34,10.7 36.4,14.5 38.5,18',
  '14.6,12 15.5,7.5 22.9,11',
  '15.5,7.5 14.5,4.5 18.5,4.3 27.4,5.1 22.9,11',
  '9.8,2.3 16,2.2 18.5,4.3 16.5,-1 15,-4.5 12.2,-5.8 16.5,-6 19,-8 22,-11 24,-11 24,-13 22,-13 22,-16 24,-17.7 11.8,-17.3',
  '27.4,5.1 31,3.7 31,2.2 29.6,-1 29.5,-4.5 30.7,-8.3 28.5,-9 28.4,-12 29.8,-13.4 24,-11',
  '31,3.7 34,4.2 36,4.5 42,4 45,5 48,8 43,11',
  '34,4.2 34,-1 37.7,-3.1 39.2,-4.7',
  '34,-1 29.6,-1.4',
  '41,-1.7 41,4',
  '36.4,14.5 42.4,12.5',
  '30.7,-8.3 34,-9.5 34.5,-11.5 40.4,-10.5',
  '34,-9.5 33,-14 35,-17 35.8,-16 34.5,-11.5',
  '33,-14 30.3,-15.6 27,-18 25.3,-17.8 29,-21 31.2,-22.3 33,-19.5 30.3,-16',
  '20,-17.9 21,-22 20,-22 20,-28.4 17,-28.6',
  '20,-24.8 23,-25.3 26,-24.7 29.4,-22.1 31.2,-22.3 32,-26.8',
  '27,-29.6 28.5,-28.7 29.3,-29.5 28,-30.6 27,-29.6',
  '-1.8,43.4 3,42.5',
  '-8.8,42 -6.5,41.7 -7.3,37.2',
  '2.5,51 6.1,49.5 8.1,49 7.6,47.6 6.2,46.3 7.4,43.8',
  '7.6,47.6 13,47.6 12.4,46.7 13.8,45.6',
  '6.1,49.5 6,51.8 7,53.3',
  '14.2,53.8 15,51.1 12.3,50.2 13.6,48.7 17,48.6 16.2,46.9 13.8,46.5',
  '15,51.1 18.8,49.5 22.6,49.1 22.1,48 17,48',
  '23.5,54 23.6,51.5 24,50.5 22.6,49.1',
  '21,55.2 23.5,54 26,55 28,56.2 27.5,57.5 28,59.5',
  '21,56.2 26.5,55.7',
  '24.4,58 27.4,57.5',
  '23.6,51.5 31.5,52 33.5,52.3 35.5,50.4 40,49.6 38.2,47.1',
  '28,56.2 31,54.5 31.5,52',
  '22.1,48 26.6,48.2 28.2,45.5 29.7,45.3',
  '16.2,46.9 20,46.1 22.1,48',
  '20,46.1 22.6,44.2 28.6,43.7',
  '22.6,44.2 22.4,42.3 23,41.3 26.5,41.7 28,42',
  '15.7,45 19,45 19.5,43 20,42 21,40.9 23,41.3',
  '11,59 12.2,61.5 12.5,64 15,66.2 18,68.5 20.6,69.1 24,68.5 28.5,70',
  '24,65.9 23.5,67.9 20.6,69.1',
  '28.5,70 29.5,68 30,65.7 31.5,62.9 28,60.5',
  '41.6,41.5 44.8,39.7 44.4,37.2 42.4,37.1 36.7,36.8',
  '40,43.4 43.8,42.6 48.5,41.8',
  '42.4,37.1 41,34.4 38.8,33.4 36,32.7 35.7,34.2',
  '44.8,39.7 48,39.6 48.8,38.4',
  '44.4,37.2 46,35 46,33 47.9,31 48,30',
  '39,32 44.7,29.2 47.5,29',
  '35,29.4 37,30 39,32',
  '52,23 55,22.7 55,20 52,19 47.5,17 43.3,17.3',
  '52,19 53.1,16.7',
  '55.3,22.7 56,24.5',
  '49,46.4 47,48 47,50 51,51.6 55,50.8 61,51 61,54 68.2,55 71,54.2 76.7,54.3 80,50.8 87.3,49.1 85,47 82.3,45.3 80.2,42.2 74,43.2 71,42.2 66.5,41.9 62,43.5 58.5,45.5 56,45 56,41.3 52.5,42',
  '56,41.3 60,41.5 62,40 66.5,37.5 61,35.5 59,37.4 53.9,37.3',
  '61,35.5 60.5,34 61.7,31.4 61,29.8 63,27 61.6,25.2',
  '61,29.8 66.3,29.9 69.3,31.9 71,34 74.9,37.2 71.5,36.5 68,37 66.5,37.5',
  '66.5,37.5 68,40 71,40.2 73.5,39.5 80.2,42.2',
  '74.9,37.2 78,35.5 79,32.5 81,30.2 85,28.3 88.1,27.9 92,27.8 97,28.3 98,25 101,21.5 105,23.2 108,21.6',
  '77.8,35.5 74,34 74.5,31 70,28 71,24.4 68.5,23.9',
  '81,30.2 80.1,28.8 88.1,26.4 88.1,27.9',
  '88.8,26.4 88.9,22',
  '88.8,26.4 92,25 92.4,22 92.5,21',
  '92.4,22 94.5,25 97,28',
  '101,21.5 98,19.7 98.5,16 99,11.7',
  '101,21.5 102,18 104.8,17.5 105.5,14.5 102.5,13.5 103,11',
  '102,22.5 104.5,20 107.5,15 107.5,12 105,10.5',
  '87.3,49.1 92,50.8 98,50.5 102,51.4 108,49.5 114,50.3 116.7,49.8 120,53 125,53 131,47.8 135,48.4 131,44.9 130.6,42.4',
  '87.8,49.2 91,45.3 96,42.7 105,41.6 111.5,43.5 119.7,46.7 116.7,49.8',
  '124.4,40 128,42 130.6,42.4',
  '126.5,37.8 128.3,38.6',
  '109.7,2 112,1.4 115,3 117.6,4.2',
  '141,-2.6 141,-9.1',
  '100,6.5 102,6.2'
];

// Inland seas
const lakes: string[] = [
  '49.2,41 47.5,43 47.6,45.6 49.1,46.4 51.2,47 53,46.8 53,45.3 51,44.5 50.9,44 52.5,42 53.9,42 54,41 52.9,40 53.9,37 50.5,37 48.9,38.3 49.5,40.3'
];

function WorldMap() {
  const meridians: number[] = [];
  for (let lon = -180; lon < 180; lon += 10) meridians.push(lon);
  const parallels: number[] = [];
  for (let lat = -80; lat <= 80; lat += 10) parallels.push(lat);

  return (
    <svg viewBox="-180 -90 360 180" className="block w-full bg-[#eff3f8]" role="img" aria-label="Edge locations">
      <g transform="scale(1 -1)">
        <g stroke="#e4eaf1" strokeWidth="0.45" fill="none">
          {meridians.map(lon => {
            const end = lon % 90 === 0 ? 90 : 80;
            return <line key={lon} x1={lon} x2={lon} y1={-end} y2={end} />;
          })}
          {parallels.map(lat => (
            <line key={lat} x1={-180} x2={180} y1={lat} y2={lat} />
          ))}
        </g>
        <g fill="#c8d7e7" stroke="#b1c5d8" strokeWidth="0.4" strokeLinejoin="round">
          {land.map((points, i) => (
            <polygon key={i} points={points} />
          ))}
        </g>
        <g fill="none" stroke="#b1c5d8" strokeWidth="0.45" strokeLinejoin="round">
          {borders.map((points, i) => (
            <polyline key={i} points={points} />
          ))}
        </g>
        <g fill="#eff3f8" stroke="#b1c5d8" strokeWidth="0.3">
          {lakes.map((points, i) => (
            <polygon key={i} points={points} />
          ))}
        </g>
        <circle cx="5" cy="52.1" r="6.8" fill="#0d6efd" fillOpacity="0.06" stroke="#0d6efd" strokeOpacity="0.35" strokeWidth="0.6" />
        <circle cx="5" cy="52.1" r="4" fill="#ffffff" />
        <circle cx="5" cy="52.1" r="3.3" fill="#0d6efd" />
        <circle cx="5" cy="52.1" r="1.3" fill="#ffffff" />
      </g>
    </svg>
  );
}

function Sidebar() {
  return (
    <aside className="flex w-[220px] shrink-0 flex-col bg-[#1a1d23]">
      <div className="flex items-center gap-2 px-4 pt-[17px] pb-[13px] text-lg leading-8 font-bold text-white">
        <BsHddNetwork className="h-[18px] w-[18px]" />
        Vertix
      </div>

      <nav className="flex-1">
        {navSections.map(section => (
          <div key={section.title}>
            <div className="px-5 pt-[11px] pb-1.5 text-[11px] leading-[18px] tracking-[1px] text-[#6c757d] uppercase">
              {section.title}
            </div>
            {section.items.map(item => {
              const Icon = item.icon;
              return (
                <a
                  key={item.label}
                  href="#"
                  className={`mx-2 mb-0.5 flex h-10 items-center gap-2 rounded-md px-3 text-base ${
                    item.active ? 'bg-[#2d3040] text-white' : 'text-[#adb5bd]'
                  }`}
                >
                  <Icon className="h-4 w-4" />
                  {item.label}
                </a>
              );
            })}
          </div>
        ))}
      </nav>

      <div className="border-t border-[#6c757d] px-4 pt-[18px] pb-4">
        <div className="text-[13px] leading-5 text-[#212529]">admin</div>
        <div className="mt-[3px] flex items-center gap-3">
          <span className="rounded-md bg-[#6c757d] px-2 text-xs leading-5 font-bold text-white">admin</span>
          <button
            type="button"
            aria-label="Log out"
            className="flex h-[31px] w-8 items-center justify-center rounded border border-[#6c757d] text-[#6c757d]"
          >
            <BsBoxArrowRight className="h-3.5 w-3.5" />
          </button>
        </div>
        <div className="mt-2 text-xs leading-[18px] text-[#adb5bd]">v0.2.25</div>
      </div>
    </aside>
  );
}

export default function App() {
  return (
    <div className="flex min-h-screen bg-[#f0f1f5] font-[Inter,sans-serif] text-[#212529]">
      <Sidebar />

      <main className="min-w-0 flex-1 p-6">
        <h1 className="mb-6 text-xl leading-6 font-semibold">Dashboard</h1>

        <div className="grid grid-cols-2 items-start gap-4">
          {/* Stats */}
          <div className="grid grid-cols-2 gap-4">
            {stats.map(stat => {
              const Icon = stat.icon;
              return (
                <div
                  key={stat.label}
                  className="flex justify-between rounded-md bg-white p-4 shadow-[0_1px_3px_rgba(0,0,0,0.08)]"
                >
                  <div className="pb-1">
                    <div className="mb-1 text-sm leading-[21px] text-[#585c60]">{stat.label}</div>
                    <div className={`text-[28px] leading-[34px] font-bold ${stat.text}`}>{stat.value}</div>
                  </div>
                  <Icon className={`mt-2 h-8 w-8 ${stat.color}`} />
                </div>
              );
            })}
          </div>

          {/* Map */}
          <div className="bg-white pt-px shadow-[0_1px_3px_rgba(0,0,0,0.08)]">
            <WorldMap />
            <div className="flex gap-4 px-[9px] py-1 text-xs leading-[19px]">
              {legend.map(entry => (
                <span key={entry.label} className="flex items-center gap-1">
                  <span className={`h-2.5 w-2.5 rounded-full ${entry.color}`}></span>
                  {entry.label}
                </span>
              ))}
            </div>
          </div>
        </div>

        {/* Recent results */}
        <section className="mt-6 overflow-hidden rounded-t-md bg-white shadow-[0_1px_3px_rgba(0,0,0,0.08)]">
          <div className="flex items-center justify-between px-4 py-2">
            <div className="flex items-center gap-3">
              <h2 className="text-sm font-semibold">Recent Command Results</h2>
              <span className="flex h-[18px] items-center gap-1 rounded-full bg-[#198754] px-[7px] text-[11px] font-bold text-white">
                <span className="h-1.5 w-1.5 rounded-full bg-[#75b798]"></span>
                live
              </span>
            </div>
            <button
              type="button"
              className="flex h-[31px] items-center gap-1 rounded bg-[#0d6efd] px-2 text-sm text-white"
            >
              <BsPlayCircle className="h-3.5 w-3.5" />
              Execute Command
            </button>
          </div>
          <table className="w-full table-fixed text-sm">
            <thead className="border-y border-[#c9cccf] bg-[#f8f9fa] text-black">
              <tr>
                {columns.map(column => (
                  <th key={column.label} className={`h-[39px] px-2 text-left font-bold ${column.width}`}>
                    {column.label}
                  </th>
                ))}
              </tr>
            </thead>
            <tbody>
              <tr>
                <td colSpan={5} className="px-2 pt-14 pb-12 text-center text-[#585c60]">
                  <BsTerminal className="mx-auto mb-4 h-8 w-8" />
                  <p className="leading-[21px]">No commands have been executed yet.</p>
                </td>
              </tr>
            </tbody>
          </table>
        </section>
      </main>
    </div>
  );
}
